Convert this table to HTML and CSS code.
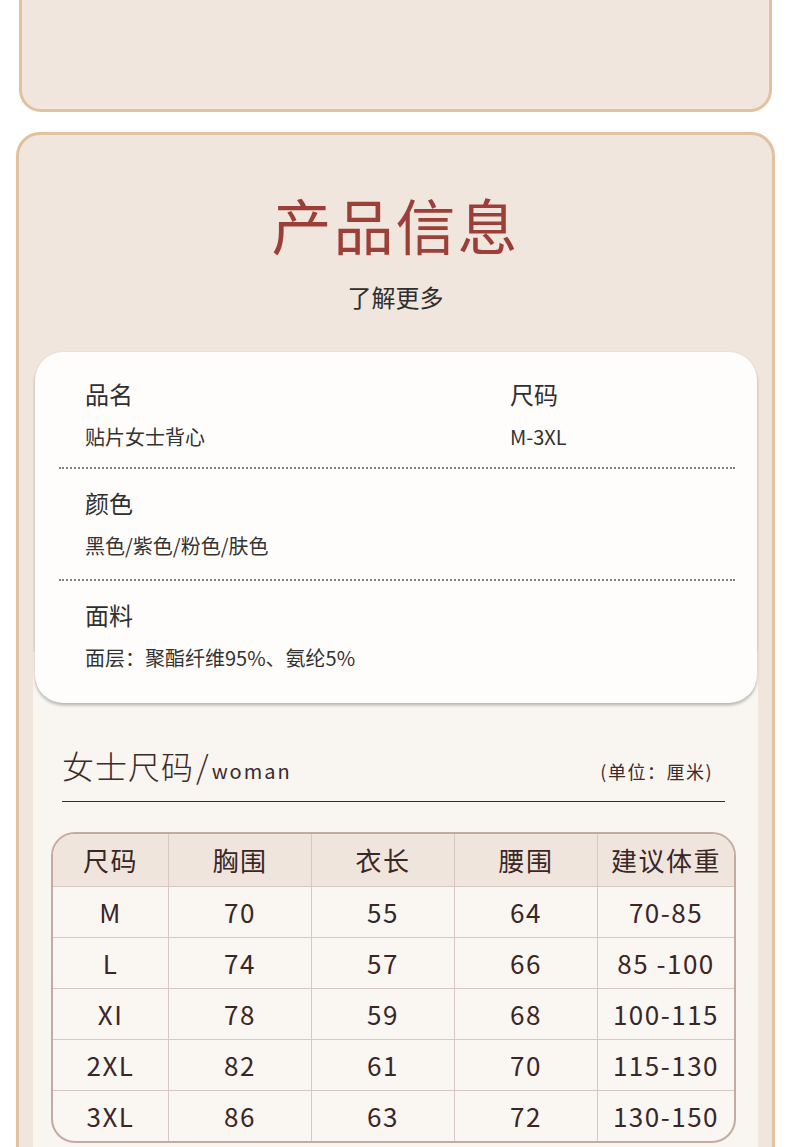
FILE: index.html
```html
<!DOCTYPE html>
<html lang="zh-CN">
<head>
<meta charset="utf-8">
<title>产品信息</title>
<link rel="stylesheet" href="styles.css">
</head>
<body>
<div class="top-card"></div>
<section class="info">
  <h1 class="title">产品信息</h1>
  <p class="subtitle">了解更多</p>
  <div class="panel">
    <div class="spec-card">
      <div class="spec-row r1">
        <div class="spec"><div class="label">品名</div><div class="value">贴片女士背心</div></div>
        <div class="spec"><div class="label">尺码</div><div class="value">M-3XL</div></div>
      </div>
      <div class="spec-row r2">
        <div class="spec"><div class="label">颜色</div><div class="value">黑色/紫色/粉色/肤色</div></div>
      </div>
      <div class="spec-row r3">
        <div class="spec"><div class="label">面料</div><div class="value">面层：聚酯纤维95%、氨纶5%</div></div>
      </div>
    </div>
    <div class="size-head">
      <div class="size-title"><span class="cn">女士尺码</span><span class="slash">/</span><span class="en">woman</span></div>
      <div class="unit">(单位：厘米)</div>
    </div>
    <div class="size-table">
      <div class="th">尺码</div><div class="th">胸围</div><div class="th">衣长</div><div class="th">腰围</div><div class="th">建议体重</div>
      <div class="td">M</div><div class="td">70</div><div class="td">55</div><div class="td">64</div><div class="td">70-85</div>
      <div class="td">L</div><div class="td">74</div><div class="td">57</div><div class="td">66</div><div class="td">85 -100</div>
      <div class="td">XI</div><div class="td">78</div><div class="td">59</div><div class="td">68</div><div class="td">100-115</div>
      <div class="td">2XL</div><div class="td">82</div><div class="td">61</div><div class="td">70</div><div class="td">115-130</div>
      <div class="td">3XL</div><div class="td">86</div><div class="td">63</div><div class="td">72</div><div class="td">130-150</div>
    </div>
  </div>
</section>
</body>
</html>
```
FILE: styles.css
```css
* { box-sizing: border-box; }
html, body { margin: 0; padding: 0; }
body {
  background: #ffffff;
  font-family: "Noto Sans CJK SC", "Noto Sans", sans-serif;
  color: #333;
  overflow: hidden;
}
.top-card {
  margin: -30px 18px 0 19px;
  height: 142px;
  background: #f0e6de;
  border: 3px solid #e0c29f;
  border-radius: 22px;
}
.info {
  margin: 20px 15px 0 16px;
  background: #f0e6de;
  border: 3px solid #e0c29f;
  border-radius: 24px;
  padding: 53px 0 20px;
}
.title {
  margin: 0;
  text-align: center;
  font-size: 60px;
  line-height: 72px;
  font-weight: 400;
  letter-spacing: 2px;
  color: #9c3f38;
}
.subtitle {
  margin: 21px 0 0;
  text-align: center;
  font-size: 24px;
  line-height: 32px;
  color: #2e2e2e;
}
.panel {
  margin: 39px 14px 0 14px;
  background: linear-gradient(to bottom, #f0e6de 0, #f0e6de 300px, #f9f5f1 300px);
  padding-bottom: 40px;
}
.spec-card {
  margin: 0 1px 0 2px;
  background: #fffdfb;
  border-radius: 28px;
  box-shadow: 0 1px 3px rgba(0,0,0,0.14), 0 3px 3px rgba(0,0,0,0.16);
}
.spec-row {
  margin: 0 22px 0 24px;
  padding: 19px 0 18px 26px;
  display: grid;
  grid-template-columns: 425px 1fr;
  border-bottom: 2px dotted #7d7d7d;
}
.spec-row.r1 { padding-top: 27px; padding-bottom: 17px; }
.spec-row.r2 { padding-bottom: 20px; }
.spec-row.r3 { border-bottom: none; padding-bottom: 32px; }
.label {
  font-size: 24px;
  line-height: 30px;
  color: #2f2f2f;
}
.value {
  margin-top: 15px;
  font-size: 20px;
  line-height: 26px;
  color: #333;
}
.size-head {
  margin: 42px 33px 0 29px;
  padding-bottom: 9px;
  border-bottom: 1px solid #3b2a2a;
  display: flex;
  justify-content: space-between;
  align-items: baseline;
  color: #3b2a2a;
}
.size-title { line-height: 40px; }
.size-title .cn {
  font-size: 32px;
  font-weight: 300;
  letter-spacing: 1px;
}
.size-title .slash {
  font-size: 32px;
  font-weight: 300;
  margin-left: 2px;
}
.size-title .en {
  font-size: 20px;
  letter-spacing: 2px;
  margin-left: 3px;
}
.unit {
  font-size: 18px;
  letter-spacing: 1.5px;
  padding-right: 12px;
}
.size-table {
  margin: 30px 22px 0 18px;
  display: grid;
  grid-template-columns: 115px 143px 143px 143px 1fr;
  border: 2px solid #c4aaa1;
  border-radius: 24px;
  overflow: hidden;
  background: #faf6f2;
  color: #3a2626;
}
.th, .td {
  text-align: center;
  font-size: 26px;
  letter-spacing: 1.5px;
  border-left: 1px solid #d8c7c2;
}
.th {
  height: 52px;
  line-height: 52px;
  background: #efe5dd;
}
.td {
  height: 51px;
  line-height: 50px;
  border-top: 1px solid #d8c7c2;
}
.th:nth-child(5n+1), .td:nth-child(5n+1) { border-left: none; }
```
